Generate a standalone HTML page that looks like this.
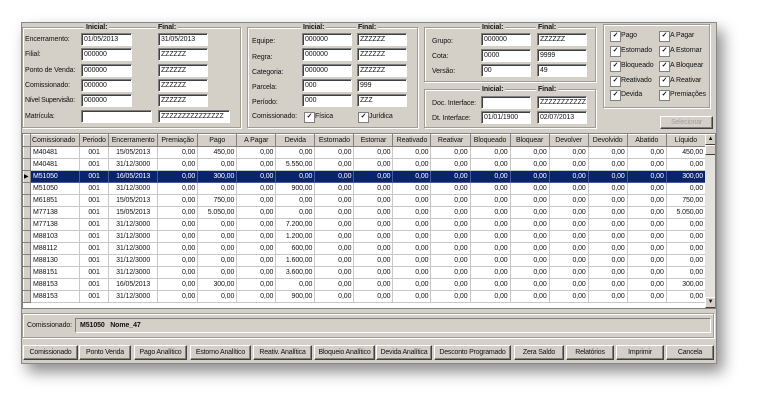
<!DOCTYPE html>
<html><head><meta charset="utf-8"><style>
*{box-sizing:border-box;margin:0;padding:0}
body{width:759px;height:406px;background:#fff;position:relative;overflow:hidden;font-family:"Liberation Sans",sans-serif;font-size:7px;color:#111;letter-spacing:-0.1px}
.win{position:absolute;left:21px;top:22px;width:696px;height:342px;background:#d4d0c8;border:1px solid #888;box-shadow:6px 8px 14px rgba(0,0,0,.45)}
.a{position:absolute}
.grp{position:absolute;border:1px solid #a09c94;box-shadow:inset 1px 1px 0 #fff,1px 1px 0 #fff}
.in{position:absolute;height:13px;background:#fff;border-top:1px solid #808080;border-left:1px solid #808080;border-right:1px solid #fff;border-bottom:1px solid #fff;box-shadow:inset 1px 1px 0 #404040;padding:1px 2px;font-size:7px;line-height:10px;white-space:nowrap;overflow:hidden}
.lb{position:absolute;font-size:7px;line-height:10px;white-space:nowrap}
.hd{position:absolute;font-weight:bold;font-size:7px;background:#d4d0c8;padding:0 2px;line-height:9px}
.cb{position:absolute;font-size:7px;line-height:10px;padding-left:11px;white-space:nowrap}
.cb:before{content:"✓";position:absolute;left:0;top:0;width:9px;height:9px;background:#fff;border:1px solid #808080;font-size:7px;line-height:8px;text-align:center;font-weight:bold}
.btn{position:absolute;height:15px;background:#d4d0c8;border:1px solid;border-color:#fff #404040 #404040 #fff;box-shadow:inset -1px -1px 0 #808080;font-size:7px;line-height:13px;text-align:center;white-space:nowrap;overflow:hidden;letter-spacing:-0.2px}
table{position:absolute;left:0;top:0;border-collapse:collapse;table-layout:fixed;font-size:7px}
td,th{height:12px;border:1px solid #c8c8c8;padding:0 2px;line-height:10px;white-space:nowrap;overflow:hidden;text-align:right}
th{background:#d4d0c8;font-weight:normal;text-align:center;border:1px solid;border-color:#fff #808080 #808080 #fff;padding:0 1px}
td.i{background:#d4d0c8;border:1px solid;border-color:#fff #808080 #808080 #fff;padding:0}
td.l{text-align:left}td.c{text-align:center}
tr.s td{background:#0a246a;color:#fff;border-color:#4a5a9a}
tr.s td.i{background:#d4d0c8;color:#000;border-color:#fff #808080 #808080 #fff;font-size:6px;text-align:left}
</style></head><body>
<div class="win"></div>

<div class="grp" style="left:22px;top:27px;width:219px;height:101px"></div>
<div class="hd" style="left:84px;top:23px">Inicial:</div>
<div class="hd" style="left:156px;top:23px">Final:</div>
<div class="lb" style="left:25px;top:35px">Encerramento:</div><div class="in" style="left:81px;top:33px;width:51px">01/05/2013</div><div class="in" style="left:158px;top:33px;width:50px">31/05/2013</div>
<div class="lb" style="left:25px;top:50px">Filial:</div><div class="in" style="left:81px;top:48px;width:51px">000000</div><div class="in" style="left:158px;top:48px;width:50px">ZZZZZZ</div>
<div class="lb" style="left:25px;top:66px">Ponto de Venda:</div><div class="in" style="left:81px;top:64px;width:51px">000000</div><div class="in" style="left:158px;top:64px;width:50px">ZZZZZZ</div>
<div class="lb" style="left:25px;top:81px">Comissionado:</div><div class="in" style="left:81px;top:79px;width:51px">000000</div><div class="in" style="left:158px;top:79px;width:50px">ZZZZZZ</div>
<div class="lb" style="left:25px;top:96px;letter-spacing:-0.3px">Nível Supervisão:</div><div class="in" style="left:81px;top:94px;width:51px">000000</div><div class="in" style="left:158px;top:94px;width:50px">ZZZZZZ</div>
<div class="lb" style="left:25px;top:112px">Matrícula:</div><div class="in" style="left:81px;top:110px;width:71px"></div><div class="in" style="left:158px;top:110px;width:72px">ZZZZZZZZZZZZZZZ</div>

<div class="grp" style="left:247px;top:27px;width:171px;height:101px"></div>
<div class="hd" style="left:301px;top:23px">Inicial:</div>
<div class="hd" style="left:356px;top:23px">Final:</div>
<div class="lb" style="left:252px;top:37px">Equipe:</div><div class="in" style="left:302px;top:33px;width:50px">000000</div><div class="in" style="left:357px;top:33px;width:50px">ZZZZZZ</div>
<div class="lb" style="left:252px;top:53px">Regra:</div><div class="in" style="left:302px;top:48px;width:50px">000000</div><div class="in" style="left:357px;top:48px;width:50px">ZZZZZZ</div>
<div class="lb" style="left:252px;top:68px">Categoria:</div><div class="in" style="left:302px;top:64px;width:50px">000000</div><div class="in" style="left:357px;top:64px;width:50px">ZZZZZZ</div>
<div class="lb" style="left:252px;top:83px">Parcela:</div><div class="in" style="left:302px;top:79px;width:50px">000</div><div class="in" style="left:357px;top:79px;width:50px">999</div>
<div class="lb" style="left:252px;top:98px">Período:</div><div class="in" style="left:302px;top:94px;width:50px">000</div><div class="in" style="left:357px;top:94px;width:50px">ZZZ</div>
<div class="lb" style="left:252px;top:112px">Comissionado:</div><div class="cb" style="left:304px;top:112px">Física</div><div class="cb" style="left:358px;top:112px">Jurídica</div>

<div class="grp" style="left:424px;top:27px;width:172px;height:55px"></div>
<div class="hd" style="left:480px;top:23px">Inicial:</div>
<div class="hd" style="left:536px;top:23px">Final:</div>
<div class="lb" style="left:432px;top:37px">Grupo:</div><div class="in" style="left:481px;top:33px;width:50px">000000</div><div class="in" style="left:537px;top:33px;width:50px">ZZZZZZ</div>
<div class="lb" style="left:432px;top:52px">Cota:</div><div class="in" style="left:481px;top:49px;width:50px">0000</div><div class="in" style="left:537px;top:49px;width:50px">9999</div>
<div class="lb" style="left:432px;top:67px">Versão:</div><div class="in" style="left:481px;top:64px;width:50px">00</div><div class="in" style="left:537px;top:64px;width:50px">49</div>

<div class="grp" style="left:424px;top:89px;width:172px;height:39px"></div>
<div class="hd" style="left:480px;top:85px">Inicial:</div>
<div class="hd" style="left:536px;top:85px">Final:</div>
<div class="lb" style="left:432px;top:99px">Doc. Interface:</div><div class="in" style="left:481px;top:96px;width:50px"></div><div class="in" style="left:537px;top:96px;width:50px">ZZZZZZZZZZZ</div>
<div class="lb" style="left:432px;top:114px">Dt. Interface:</div><div class="in" style="left:481px;top:111px;width:50px">01/01/1900</div><div class="in" style="left:537px;top:111px;width:50px">02/07/2013</div>

<div class="grp" style="left:603px;top:24px;width:107px;height:84px"></div>
<div class="cb" style="left:610px;top:31px">Pago</div><div class="cb" style="left:659px;top:31px">A Pagar</div>
<div class="cb" style="left:610px;top:46px">Estornado</div><div class="cb" style="left:659px;top:46px">A Estornar</div>
<div class="cb" style="left:610px;top:61px">Bloqueado</div><div class="cb" style="left:659px;top:61px">A Bloquear</div>
<div class="cb" style="left:610px;top:76px">Reativado</div><div class="cb" style="left:659px;top:76px">A Reativar</div>
<div class="cb" style="left:610px;top:90px">Devida</div><div class="cb" style="left:659px;top:90px">Premiações</div>
<div class="btn" style="left:660px;top:116px;width:53px;height:13px;line-height:11px;color:#a0a0a0">Selecionar</div>

<div class="a" style="left:22px;top:133px;width:694px;height:176px;background:#fff;border:1px solid #808080;overflow:hidden">
<table style="width:683px">
<colgroup><col style="width:7px"><col style="width:49px"><col style="width:29px"><col style="width:49px"><col style="width:40px"><col style="width:39px"><col style="width:39px"><col style="width:39px"><col style="width:39px"><col style="width:39px"><col style="width:38px"><col style="width:39px"><col style="width:40px"><col style="width:39px"><col style="width:39px"><col style="width:39px"><col style="width:39px"><col style="width:39px"></colgroup>
<tr><th></th><th style="text-align:left">Comissionado</th><th>Periodo</th><th>Encerramento</th><th>Premiação</th><th>Pago</th><th>A Pagar</th><th>Devida</th><th>Estornado</th><th>Estornar</th><th>Reativado</th><th>Reativar</th><th>Bloqueado</th><th>Bloquear</th><th>Devolver</th><th>Devolvido</th><th>Abatido</th><th>Líquido</th></tr>
<tr><td class="i"></td><td class="l">M40481</td><td class="c">001</td><td class="c">15/05/2013</td><td>0,00</td><td>450,00</td><td>0,00</td><td>0,00</td><td>0,00</td><td>0,00</td><td>0,00</td><td>0,00</td><td>0,00</td><td>0,00</td><td>0,00</td><td>0,00</td><td>0,00</td><td>450,00</td></tr>
<tr><td class="i"></td><td class="l">M40481</td><td class="c">001</td><td class="c">31/12/3000</td><td>0,00</td><td>0,00</td><td>0,00</td><td>5.550,00</td><td>0,00</td><td>0,00</td><td>0,00</td><td>0,00</td><td>0,00</td><td>0,00</td><td>0,00</td><td>0,00</td><td>0,00</td><td>0,00</td></tr>
<tr class="s"><td class="i">▶</td><td class="l">M51050</td><td class="c">001</td><td class="c">16/05/2013</td><td>0,00</td><td>300,00</td><td>0,00</td><td>0,00</td><td>0,00</td><td>0,00</td><td>0,00</td><td>0,00</td><td>0,00</td><td>0,00</td><td>0,00</td><td>0,00</td><td>0,00</td><td>300,00</td></tr>
<tr><td class="i"></td><td class="l">M51050</td><td class="c">001</td><td class="c">31/12/3000</td><td>0,00</td><td>0,00</td><td>0,00</td><td>900,00</td><td>0,00</td><td>0,00</td><td>0,00</td><td>0,00</td><td>0,00</td><td>0,00</td><td>0,00</td><td>0,00</td><td>0,00</td><td>0,00</td></tr>
<tr><td class="i"></td><td class="l">M61851</td><td class="c">001</td><td class="c">15/05/2013</td><td>0,00</td><td>750,00</td><td>0,00</td><td>0,00</td><td>0,00</td><td>0,00</td><td>0,00</td><td>0,00</td><td>0,00</td><td>0,00</td><td>0,00</td><td>0,00</td><td>0,00</td><td>750,00</td></tr>
<tr><td class="i"></td><td class="l">M77138</td><td class="c">001</td><td class="c">15/05/2013</td><td>0,00</td><td>5.050,00</td><td>0,00</td><td>0,00</td><td>0,00</td><td>0,00</td><td>0,00</td><td>0,00</td><td>0,00</td><td>0,00</td><td>0,00</td><td>0,00</td><td>0,00</td><td>5.050,00</td></tr>
<tr><td class="i"></td><td class="l">M77138</td><td class="c">001</td><td class="c">31/12/3000</td><td>0,00</td><td>0,00</td><td>0,00</td><td>7.200,00</td><td>0,00</td><td>0,00</td><td>0,00</td><td>0,00</td><td>0,00</td><td>0,00</td><td>0,00</td><td>0,00</td><td>0,00</td><td>0,00</td></tr>
<tr><td class="i"></td><td class="l">M88103</td><td class="c">001</td><td class="c">31/12/3000</td><td>0,00</td><td>0,00</td><td>0,00</td><td>1.200,00</td><td>0,00</td><td>0,00</td><td>0,00</td><td>0,00</td><td>0,00</td><td>0,00</td><td>0,00</td><td>0,00</td><td>0,00</td><td>0,00</td></tr>
<tr><td class="i"></td><td class="l">M88112</td><td class="c">001</td><td class="c">31/12/3000</td><td>0,00</td><td>0,00</td><td>0,00</td><td>600,00</td><td>0,00</td><td>0,00</td><td>0,00</td><td>0,00</td><td>0,00</td><td>0,00</td><td>0,00</td><td>0,00</td><td>0,00</td><td>0,00</td></tr>
<tr><td class="i"></td><td class="l">M88130</td><td class="c">001</td><td class="c">31/12/3000</td><td>0,00</td><td>0,00</td><td>0,00</td><td>1.600,00</td><td>0,00</td><td>0,00</td><td>0,00</td><td>0,00</td><td>0,00</td><td>0,00</td><td>0,00</td><td>0,00</td><td>0,00</td><td>0,00</td></tr>
<tr><td class="i"></td><td class="l">M88151</td><td class="c">001</td><td class="c">31/12/3000</td><td>0,00</td><td>0,00</td><td>0,00</td><td>3.600,00</td><td>0,00</td><td>0,00</td><td>0,00</td><td>0,00</td><td>0,00</td><td>0,00</td><td>0,00</td><td>0,00</td><td>0,00</td><td>0,00</td></tr>
<tr><td class="i"></td><td class="l">M88153</td><td class="c">001</td><td class="c">16/05/2013</td><td>0,00</td><td>300,00</td><td>0,00</td><td>0,00</td><td>0,00</td><td>0,00</td><td>0,00</td><td>0,00</td><td>0,00</td><td>0,00</td><td>0,00</td><td>0,00</td><td>0,00</td><td>300,00</td></tr>
<tr><td class="i"></td><td class="l">M88153</td><td class="c">001</td><td class="c">31/12/3000</td><td>0,00</td><td>0,00</td><td>0,00</td><td>900,00</td><td>0,00</td><td>0,00</td><td>0,00</td><td>0,00</td><td>0,00</td><td>0,00</td><td>0,00</td><td>0,00</td><td>0,00</td><td>0,00</td></tr>
</table>
<div class="a" style="left:682px;top:0;width:11px;height:174px;background:#e4e2dc">
 <div class="a" style="left:0;top:0;width:11px;height:11px;background:#d4d0c8;border:1px solid;border-color:#fff #404040 #404040 #fff;font-size:6px;line-height:9px;text-align:center">▲</div>
 <div class="a" style="left:0;top:11px;width:11px;height:10px;background:#d4d0c8;border:1px solid;border-color:#fff #404040 #404040 #fff"></div>
 <div class="a" style="left:0;top:163px;width:11px;height:11px;background:#d4d0c8;border:1px solid;border-color:#fff #404040 #404040 #fff;font-size:6px;line-height:9px;text-align:center">▼</div>
</div>
</div>

<div class="grp" style="left:22px;top:313px;width:692px;height:25px"></div>
<div class="lb" style="left:27px;top:321px">Comissionado:</div>
<div class="a" style="left:75px;top:318px;width:636px;height:15px;border:1px solid;border-color:#808080 #fff #fff #808080;font-weight:bold;font-size:7px;line-height:13px;padding-left:4px">M51050&nbsp;&nbsp;&nbsp;Nome_47</div>

<div class="btn" style="left:23px;top:345px;width:55px">Comissionado</div>
<div class="btn" style="left:79px;top:345px;width:52px">Ponto Venda</div>
<div class="btn" style="left:134px;top:345px;width:53px">Pago Analítico</div>
<div class="btn" style="left:190px;top:345px;width:61px">Estorno Analítico</div>
<div class="btn" style="left:253px;top:345px;width:59px">Reativ. Analítica</div>
<div class="btn" style="left:314px;top:345px;width:61px">Bloqueio Analítico</div>
<div class="btn" style="left:376px;top:345px;width:56px">Devida Analítica</div>
<div class="btn" style="left:434px;top:345px;width:77px">Desconto Programado</div>
<div class="btn" style="left:514px;top:345px;width:50px">Zera Saldo</div>
<div class="btn" style="left:566px;top:345px;width:48px">Relatórios</div>
<div class="btn" style="left:616px;top:345px;width:48px">Imprimir</div>
<div class="btn" style="left:666px;top:345px;width:48px">Cancela</div>
</body></html>
